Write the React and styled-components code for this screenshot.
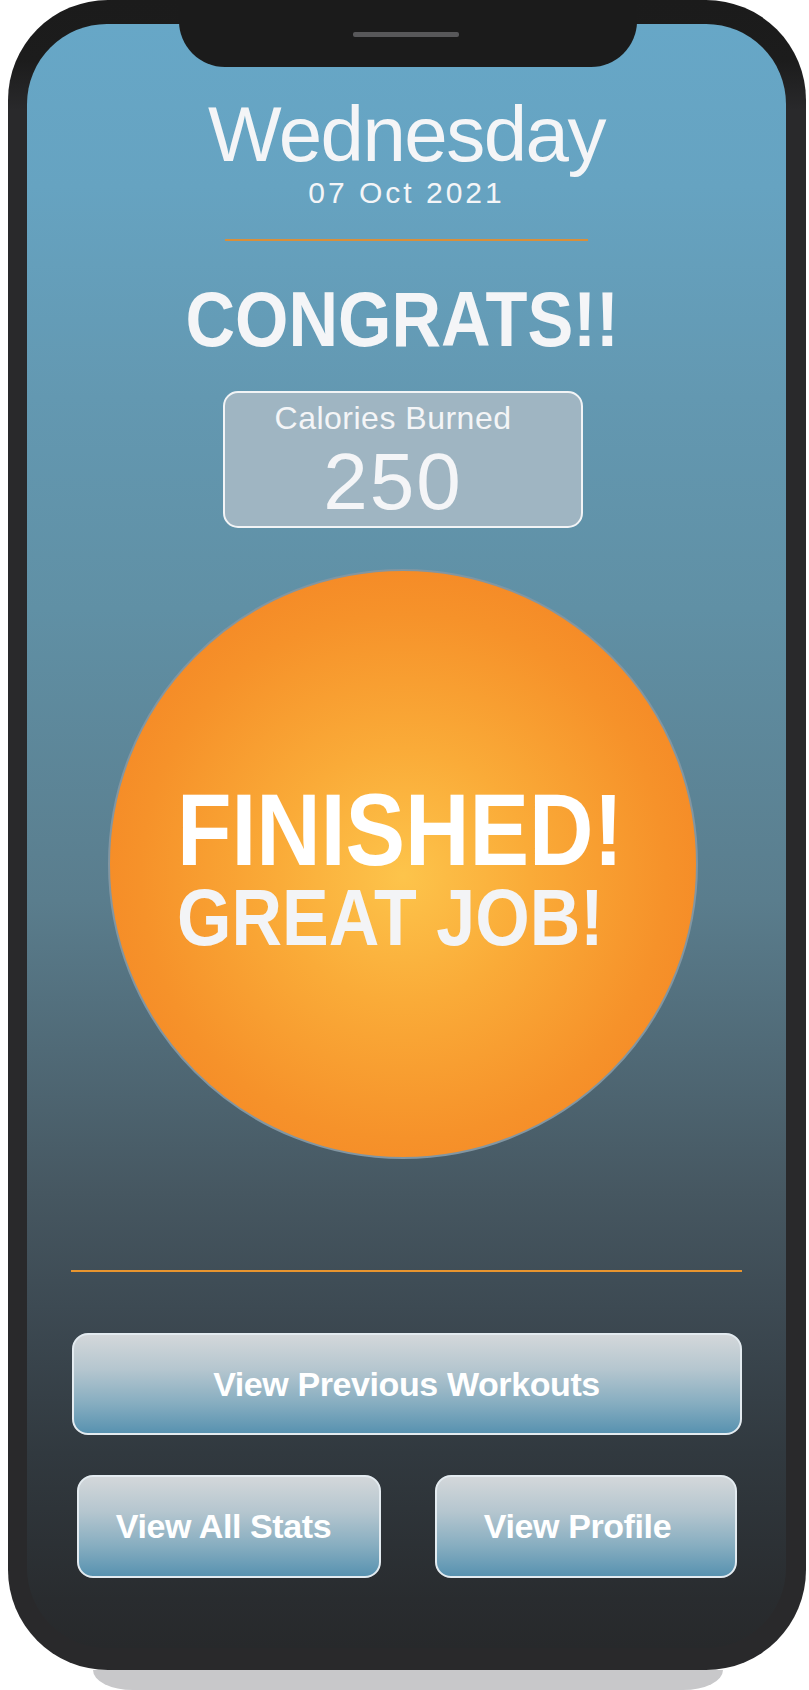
import React from 'react'
import styled, { createGlobalStyle } from 'styled-components'

const GlobalStyle = createGlobalStyle`
  html, body {
    margin: 0;
    padding: 0;
    background: #ffffff;
  }
  body {
    font-family: "Liberation Sans", Arial, sans-serif;
  }
`

const Stage = styled.div`
  width: 809px;
  height: 1690px;
  overflow: hidden;
`

const Phone = styled.div`
  position: relative;
  width: 798px;
  height: 1670px;
  margin-left: 8px;
  box-sizing: border-box;
  padding: 24px 20px 22px 19px;
  border-radius: 100px;
  background: linear-gradient(180deg, #1b1b1b 0px, #1c1c1c 60px, #29292b 110px, #29292b 100%);
`

const Base = styled.div`
  width: 630px;
  height: 20px;
  margin-left: 93px;
  background: #c8c8ca;
  border-radius: 0 0 40px 40px / 0 0 20px 20px;
`

const Screen = styled.div`
  position: relative;
  height: 100%;
  box-sizing: border-box;
  padding-top: 71px;
  border-radius: 80px;
  display: flex;
  flex-direction: column;
  align-items: center;
  color: #f4f5f7;
  background: linear-gradient(
    180deg,
    #67a7c7 0%,
    #66a3c1 10%,
    #6398b1 23%,
    #6090a5 36%,
    #5a7d8d 54%,
    #4d6470 66%,
    #465761 72%,
    #3d4a53 79%,
    #31393f 88%,
    #292c2f 97%,
    #27292b 100%
  );
`

const Notch = styled.div`
  position: absolute;
  top: -24px;
  left: 152px;
  width: 458px;
  height: 67px;
  background: #1b1b1b;
  border-radius: 0 0 46px 46px;
`

const Speaker = styled.div`
  position: absolute;
  top: 32px;
  left: 174px;
  width: 106px;
  height: 5px;
  border-radius: 2px;
  background: #58585a;
`

const Day = styled.div`
  font-size: 78px;
  line-height: 78px;
  letter-spacing: -1.5px;
  font-weight: 400;
`

const DateText = styled.div`
  margin-top: 4px;
  font-size: 30px;
  line-height: 32px;
  letter-spacing: 3px;
`

const Rule = styled.div`
  height: 2px;
  width: ${p => p.$width}px;
  margin-top: ${p => p.$top}px;
  background: ${p => p.$color};
`

const Headline = styled.div`
  margin-top: 38px;
  margin-right: 8px;
  font-size: 78px;
  line-height: 80px;
  font-weight: 700;
  transform: scaleX(0.88);
`

const StatBox = styled.div`
  margin-top: 32px;
  margin-right: 7px;
  width: 360px;
  height: 137px;
  box-sizing: border-box;
  padding: 7px 20px 0 0;
  border: 2px solid #f2f4f6;
  border-radius: 15px;
  background: #9fb5c2;
  display: flex;
  flex-direction: column;
  align-items: center;
`

const StatLabel = styled.div`
  font-size: 32px;
  line-height: 36px;
  letter-spacing: 0.5px;
`

const StatValue = styled.div`
  margin-top: 6px;
  font-size: 80px;
  line-height: 80px;
  letter-spacing: 2px;
`

const Badge = styled.div`
  margin-top: 41px;
  margin-right: 7px;
  width: 590px;
  height: 590px;
  box-sizing: border-box;
  border-radius: 50%;
  border: 2px solid #8296a2;
  padding: 211px 0 0 67px;
  background: radial-gradient(circle at 50% 52%, #fdc44b 0%, #faab38 30%, #f6922a 62%, #f37b20 100%);
  display: flex;
  flex-direction: column;
  align-items: flex-start;
`

const BadgeText = styled.div`
  transform: scaleX(0.875);
  transform-origin: left center;
  font-weight: 700;
`

const BadgeLine = styled.div`
  font-size: ${p => p.$size}px;
  line-height: ${p => p.$lh}px;
  color: ${p => p.$color};
  white-space: nowrap;
`

const Button = styled.button`
  box-sizing: border-box;
  width: ${p => p.$width}px;
  height: ${p => p.$height}px;
  padding: 0 ${p => p.$shift || 0}px 0 0;
  border: 2px solid #e3ebf0;
  border-radius: 16px;
  background: linear-gradient(180deg, #d3d7da 0%, #b5c6cf 35%, #86adc0 70%, #5892b0 100%);
  color: #ffffff;
  font-family: "Liberation Sans", Arial, sans-serif;
  font-weight: 700;
  font-size: 34px;
  letter-spacing: -0.4px;
  display: flex;
  align-items: center;
  justify-content: center;
  cursor: pointer;
`

const ButtonRow = styled.div`
  margin-top: 40px;
  display: flex;
  gap: 54px;
`

const WideButton = styled(Button)`
  margin-top: 61px;
`

export default function App() {
  return (
    <Stage>
      <GlobalStyle />
      <Phone>
        <Screen>
          <Notch>
            <Speaker />
          </Notch>
          <Day>Wednesday</Day>
          <DateText>07 Oct 2021</DateText>
          <Rule $width={363} $top={30} $color="#d98f3a" />
          <Headline>CONGRATS!!</Headline>
          <StatBox>
            <StatLabel>Calories Burned</StatLabel>
            <StatValue>250</StatValue>
          </StatBox>
          <Badge>
            <BadgeText>
              <BadgeLine $size={102} $lh={96} $color="#ffffff">FINISHED!</BadgeLine>
              <BadgeLine $size={80} $lh={80} $color="#f3f4f6">GREAT JOB!</BadgeLine>
            </BadgeText>
          </Badge>
          <Rule $width={671} $top={111} $color="#e8952f" />
          <WideButton $width={670} $height={102}>View Previous Workouts</WideButton>
          <ButtonRow>
            <Button $width={304} $height={103} $shift={10}>View All Stats</Button>
            <Button $width={302} $height={103} $shift={16}>View Profile</Button>
          </ButtonRow>
        </Screen>
      </Phone>
      <Base />
    </Stage>
  )
}
